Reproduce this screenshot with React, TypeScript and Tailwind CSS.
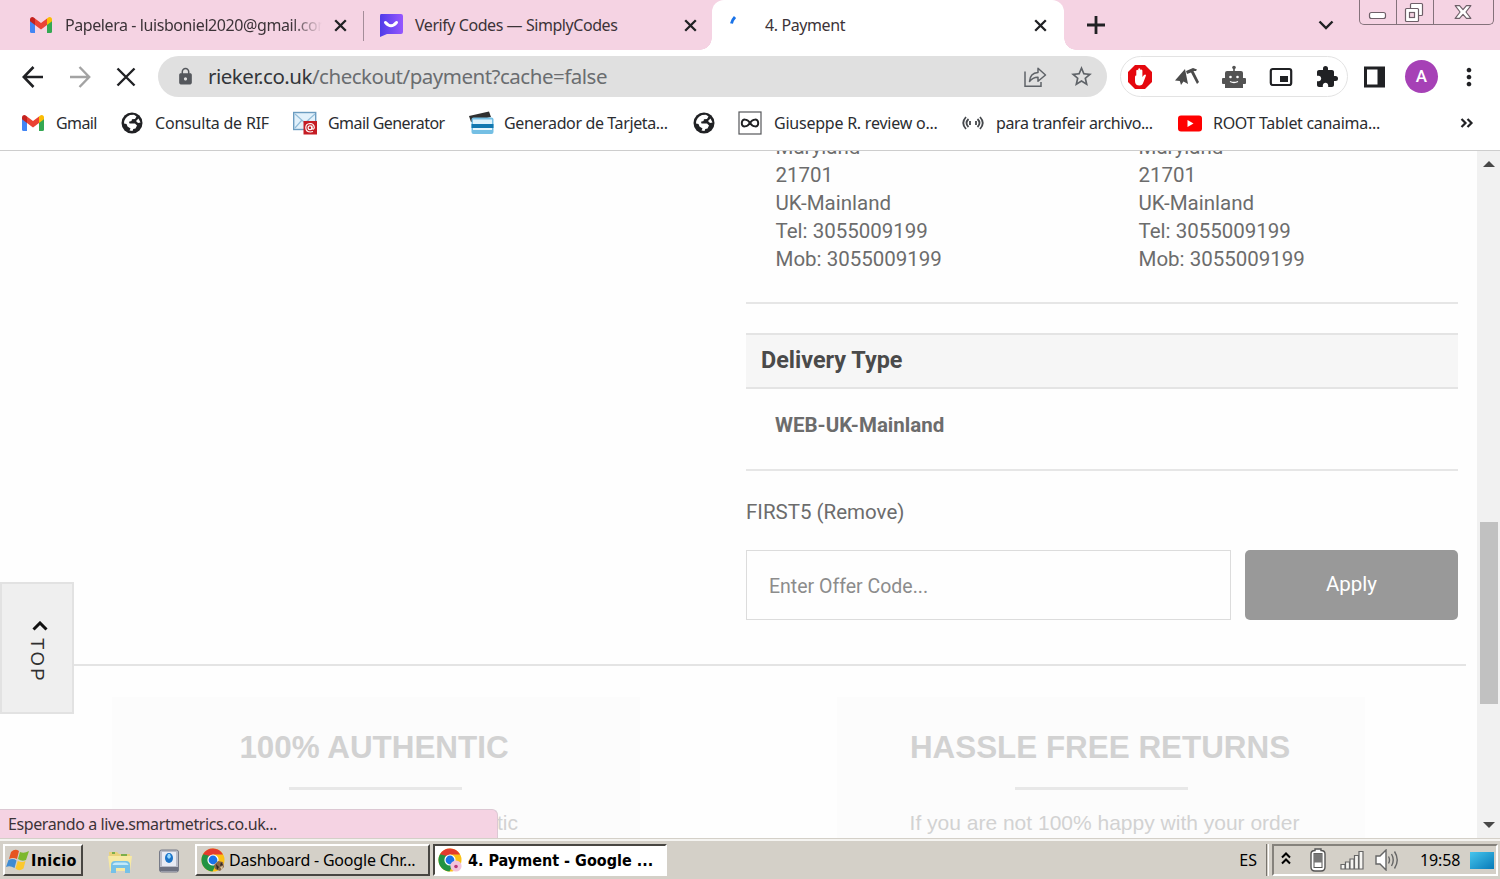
import React from "react";
import { MdLock, MdStarBorder, MdExtension, MdMoreVert } from "react-icons/md";

const UI = "font-['Noto_Sans',sans-serif] text-[16px] leading-none whitespace-nowrap";

function GmailIcon() {
  return (
    <svg viewBox="0 0 22 16" className="h-[16px] w-[22px] shrink-0">
      <path d="M0 3v11.5Q0 16 1.5 16H5V6z" fill="#4285f4" />
      <path d="M22 3v11.5Q22 16 20.500 16H17V6z" fill="#34a853" />
      <path d="M17 1.500V8l5-3.700V2.500Q22 0 19.500 0 18.300 0 17 1.500z" fill="#fbbc04" />
      <path d="M0 2.500V4.300L5 8V1.500Q3.700 0 2.500 0 0 0 0 2.500z" fill="#c5221f" />
      <path d="M5 1.500V8l6 4.500L17 8V1.500L11 6z" fill="#ea4335" />
    </svg>
  );
}

function TabClose() {
  return (
    <svg viewBox="0 0 13 13" className="size-[13px] shrink-0"><path d="M1.200 1.200 11.800 11.800M11.800 1.200 1.200 11.800" stroke="#202124" strokeWidth="2.300" /></svg>
  );
}

function Globe() {
  return (
    <svg viewBox="0 0 22 22" className="size-[22px] shrink-0">
      <circle cx="11" cy="11" r="10.500" fill="#202124" />
      <path d="M9 3 13 2.800 15.500 4.500 14 7 11 7.300 10.500 9 8 9.700 8.500 11.500 14 11.500 16 13.500 14.500 16.500 12.300 17 11.500 19 8.500 18.500 9.500 16.500 6.500 14.500 5.500 12 3 11.500Q3 5.500 9 3z" fill="#fff" />
      <path d="M17.500 6.500 19.500 10.500 17 11 15 9z" fill="#fff" />
    </svg>
  );
}

function Chrome({ badge }: { badge: string }) {
  return (
    <svg viewBox="0 0 24 24" className="size-[24px] shrink-0">
      <circle cx="12" cy="12" r="11.500" fill="#fbc116" />
      <path d="M2 6.200A11.500 11.500 0 0 0 11.500 23.500L16 14.500 12 12z" fill="#229342" />
      <path d="M2 6.200A11.500 11.500 0 0 1 22 6.500H12L7 10z" fill="#e33b2e" />
      <path d="M2 6.200 6.500 14 9 8z" fill="#229342" />
      <circle cx="12" cy="12" r="5.600" fill="#fff" />
      <circle cx="12" cy="12" r="4.400" fill="#1a73e8" />
      {badge === "photo" ? (
        <g>
          <path d="M13 17 17 13 22 14 23 19 19 23 14 21z" fill="#8b6848" />
          <path d="M15 16l3 3-2 3zM20 14l2 3-3 1z" fill="#332a24" />
          <path d="M19 19l3-1-1 4z" fill="#d9c7a0" />
        </g>
      ) : (
        <g>
          <circle cx="18" cy="18" r="5.600" fill="#f3c4dc" />
          <circle cx="18" cy="18.500" r="1.800" fill="#b83a77" />
        </g>
      )}
    </svg>
  );
}

function TabStrip() {
  return (
    <div className="flex h-[50px] bg-[#f5d3e3] text-[#3c3338]">
      <div className="flex w-[363px] items-center pl-[30px]">
        <GmailIcon />
        <span className={UI + " ml-[13px] w-[257px] overflow-hidden py-1 tracking-[-0.42px] [mask-image:linear-gradient(90deg,#000_88%,transparent)]"}>Papelera - luisboniel2020@gmail.com</span>
        <div className="ml-[12px]"><TabClose /></div>
      </div>
      <div className="mt-[11px] h-[30px] w-px bg-[#a48d99]" />
      <div className="flex w-[348px] items-center pl-[15px]">
        <svg viewBox="0 0 24 24" className="size-[24px] shrink-0">
          <defs><linearGradient id="sc" x1="0" x2="1"><stop stopColor="#4f3be8" /><stop offset="1" stopColor="#9657ff" /></linearGradient></defs>
          <path d="M2 1H22Q24 1 24 3V19Q24 21 22 21H8L1 24V3Q1 1 2 1z" fill="url(#sc)" />
          <path d="M6.500 9.500Q12 16 17.500 9.500" fill="none" stroke="#fff" strokeWidth="3" strokeLinecap="round" />
        </svg>
        <span className={UI + " ml-[12px] w-[269px] tracking-[-0.44px]"}>Verify Codes — SimplyCodes</span>
        <TabClose />
      </div>
      <div className="relative flex w-[352px] items-center rounded-t-[12px] bg-white pl-[17px]">
        <div className="absolute bottom-0 -left-[12px] size-[12px] bg-[radial-gradient(circle_at_0_0,transparent_11.5px,#fff_12px)]" />
        <div className="absolute bottom-0 -right-[12px] size-[12px] bg-[radial-gradient(circle_at_100%_0,transparent_11.5px,#fff_12px)]" />
        <svg viewBox="0 0 10 12" className="mb-[10px] h-[12px] w-[10px]"><path d="M2.500 9.500Q3.500 5.500 6 3" stroke="#1a73e8" strokeWidth="3" fill="none" /></svg>
        <span className={UI + " ml-[26px] w-[254px] tracking-[-0.4px]"}>4. Payment</span>
        <div className="ml-[15px]"><TabClose /></div>
      </div>
      <div className="flex w-[295px] items-center pl-[23px]">
        <svg viewBox="0 0 18 18" className="size-[18px]"><path d="M9 0V18M0 9H18" stroke="#202124" strokeWidth="2.800" /></svg>
        <svg viewBox="0 0 16 10" className="ml-[213px] h-[10px] w-[16px]"><path d="M1.500 1.500 8 8 14.500 1.500" stroke="#202124" strokeWidth="2.400" fill="none" /></svg>
      </div>
      <div className="flex h-[25px] w-[135px] rounded-b-[5px] border border-t-0 border-[#84727b]">
        <div className="w-[37px] border-r border-[#84727b]">
          <svg viewBox="0 0 36 24" className="h-[24px] w-[36px]"><rect x="9.500" y="12.500" width="16" height="6" rx="2" fill="#fff" stroke="#6e5f68" strokeWidth="1.200" /></svg>
        </div>
        <div className="w-[37px] border-r border-[#84727b]">
          <svg viewBox="0 0 36 24" className="h-[24px] w-[36px]" fill="#fff" stroke="#6e5f68" strokeWidth="1.200"><rect x="13.500" y="3.500" width="12" height="12" rx="1" /><rect x="8.500" y="8.500" width="13" height="13" rx="1" /><rect x="12.500" y="12.500" width="5" height="5" fill="#f5d3e3" /></svg>
        </div>
        <svg viewBox="0 0 60 24" className="h-[24px] w-[60px]"><path d="M21.500 5.500H26L29.500 9.500 33 5.500H37.500L32.500 12 37.500 18.500H33L29.500 14.500 26 18.500H21.500L26.500 12z" fill="#fff" stroke="#6e5f68" strokeWidth="1.200" strokeLinejoin="round" /></svg>
      </div>
    </div>
  );
}

function Toolbar() {
  return (
    <div className="flex h-[53px] items-center bg-white text-[#202124]">
      <svg viewBox="0 0 22 22" className="ml-[22px] size-[22px]"><path d="M21 11H2M11.500 1 1.800 11 11.500 21" stroke="#202124" strokeWidth="2.600" fill="none" /></svg>
      <svg viewBox="0 0 22 22" className="ml-[25px] size-[22px]"><path d="M1 11H20M10.500 1 20.200 11 10.500 21" stroke="#a3a3a3" strokeWidth="2.400" fill="none" /></svg>
      <svg viewBox="0 0 20 20" className="ml-[25px] size-[20px]"><path d="M1.500 1.500 18.500 18.500M18.500 1.500 1.500 18.500" stroke="#202124" strokeWidth="2.400" /></svg>
      <div className="ml-[22px] flex h-[41px] w-[949px] items-center rounded-full bg-[#e0e0e0] pl-[18px]">
        <MdLock className="size-[19px] text-[#55585d]" />
        <span className="ml-[13px] w-[815px] font-['Noto_Sans',sans-serif] text-[20.5px] leading-none tracking-[-0.49px] whitespace-nowrap text-[#6a6d70]"><span className="text-[#33363a]">rieker.co.uk</span>/checkout/payment?cache=false</span>
        <svg viewBox="0 0 24 22" className="h-[22px] w-[24px] shrink-0" fill="none" stroke="#5f6368" strokeWidth="1.500"><path d="M2 5.500V20.300H18V16" /><path d="M6.500 15.500Q7 7 15 6.500V2.300L22.500 9 15 15.300V11.200Q10 11 6.500 15.500z" strokeLinejoin="round" /></svg>
        <MdStarBorder className="ml-[22px] size-[25px] shrink-0 text-[#5f6368]" />
      </div>
      <div className="ml-[13px] flex h-[41px] w-[228px] items-center rounded-full border border-[#e3e3e3] pl-[7px]">
        <svg viewBox="0 0 24 24" className="size-[24px] shrink-0"><path d="M7 0H17L24 7V17L17 24H7L0 17V7z" fill="#e5080f" /><path d="M7 12Q7 10 8.300 10.500V5.500Q9.200 4 10.200 5.500V4Q11.200 2.700 12.300 4V5Q13.500 3.700 14.400 5.500V12L16 10Q17.700 9 18 10.500L15.500 17Q14.500 20.500 11.500 20.500 7 20.500 7 16z" fill="#fff" /></svg>
        <svg viewBox="0 0 24 18" className="ml-[23px] h-[18px] w-[24px] shrink-0" fill="#4b4b4b"><path d="M10 1 13 16 8.500 13.500 6 17 4.800 13 0 12.500z" /><path d="M11 3 18 0 22 1.500 21 3 18.500 3 24 14 22 16 16 4.500 12 6z" /></svg>
        <svg viewBox="0 0 24 24" className="ml-[23px] size-[24px] shrink-0"><circle cx="12" cy="2.500" r="1.800" fill="#535353" /><path d="M11.200 3h1.600v4h-1.600zM3 8Q3 6 5 6H19Q21 6 21 8V13H23Q24 13 24 14V18Q24 19 23 19H21V23H3V19H1Q0 19 0 18V14Q0 13 1 13H3z" fill="#535353" /><circle cx="8.500" cy="12" r="1.300" fill="#fff" /><circle cx="15.500" cy="12" r="1.300" fill="#fff" /><path d="M8 16.500Q12 18.500 16 16.500" fill="none" stroke="#fff" strokeWidth="1.300" /></svg>
        <svg viewBox="0 0 24 20" className="ml-[23px] h-[20px] w-[24px] shrink-0"><rect x="1.800" y="2" width="20.400" height="16" rx="2" fill="none" stroke="#202124" strokeWidth="2.200" /><rect x="11" y="9" width="8" height="6" fill="#202124" /></svg>
        <MdExtension className="ml-[22px] size-[24px] shrink-0" />
      </div>
      <svg viewBox="0 0 21 22" className="ml-[16px] h-[22px] w-[21px]"><rect x="1.500" y="2" width="18" height="18" fill="none" stroke="#202124" strokeWidth="3" /><rect x="13.500" y="1" width="7" height="20" fill="#202124" /></svg>
      <div className="ml-[20px] flex size-[33px] items-center justify-center rounded-full bg-[#a641b6] font-[Roboto,sans-serif] text-[17px] font-medium text-white">A</div>
      <MdMoreVert className="ml-[17px] size-[28px]" />
    </div>
  );
}

function Bookmarks() {
  const text = UI + " text-[#2b2d31]";
  return (
    <div className="flex h-[48px] items-center border-b border-[#cdcdcd] bg-white pb-[7px] pl-[22px]">
      <div className="flex w-[99px] items-center gap-[12px]"><GmailIcon /><span className={text + " tracking-[-0.6px]"}>Gmail</span></div>
      <div className="flex w-[172px] items-center gap-[12px]"><Globe /><span className={text + " tracking-[-0.2px]"}>Consulta de RIF</span></div>
      <div className="flex w-[176px] items-center gap-[11px]">
        <svg viewBox="0 0 24 24" className="size-[24px] shrink-0"><rect x=".700" y="1.500" width="22" height="17" fill="#e2f1fb" stroke="#6b9cc0" strokeWidth="1.400" /><path d="M2 3 12 12 22 3M2 17 9 9M21 17 15 9" stroke="#93bdd9" fill="none" strokeWidth="1.200" /><rect x="10.500" y="10" width="13.500" height="13.500" fill="#c51c24" /><circle cx="17" cy="16.700" r="1.900" fill="none" stroke="#fff" strokeWidth="1.200" /><path d="M18.900 14.500V17.500Q21 19 21.300 16.500 21 12.500 17 12.500 12.800 12.800 12.800 16.700 13 21 17.500 21L20 20.500" fill="none" stroke="#fff" strokeWidth="1.200" /></svg>
        <span className={text + " tracking-[-0.55px]"}>Gmail Generator</span>
      </div>
      <div className="flex w-[224px] items-center gap-[10px]">
        <svg viewBox="0 0 25 24" className="h-[24px] w-[25px] shrink-0"><path d="M0 5 20 .500 22 6 2 11z" fill="#303030" /><rect x="2.500" y="6.500" width="22" height="16.500" rx="2" fill="#74bfe4" /><rect x="4" y="8.500" width="19" height="4.500" fill="#dff2fb" /><rect x="2.500" y="13" width="22" height="4" fill="#1278b0" /><rect x="4" y="17" width="19" height="2" fill="#e8f6fc" /></svg>
        <span className={text + " tracking-[-0.37px]"}>Generador de Tarjeta...</span>
      </div>
      <div className="w-[45px]"><Globe /></div>
      <div className="flex w-[224px] items-center gap-[12px]">
        <svg viewBox="0 0 24 24" className="size-[24px] shrink-0"><rect x="1" y="1" width="22" height="22" fill="#fff" stroke="#55575a" strokeWidth="1.200" /><path d="M12 12C9.500 8 4 7 3.800 12S9.500 16 12 12 20 7 20.200 12 14.500 16 12 12z" fill="none" stroke="#202124" strokeWidth="2" /></svg>
        <span className={text + " tracking-[-0.23px]"}>Giuseppe R. review o...</span>
      </div>
      <div className="flex w-[216px] items-center gap-[12px]">
        <svg viewBox="0 0 22 14" className="h-[14px] w-[22px] shrink-0" fill="none" stroke="#45484c" strokeWidth="1.800"><path d="M4 1Q-1.500 7 4 13M6.500 3Q2.500 7 6.500 11M8 5V9M18 1Q23.500 7 18 13M15.500 3Q19.500 7 15.500 11M14 5V9" /></svg>
        <span className={text + " tracking-[-0.4px]"}>para tranfeir archivo...</span>
      </div>
      <div className="flex w-[282px] items-center gap-[11px]">
        <svg viewBox="0 0 24 16" className="h-[17px] w-[24px] shrink-0"><rect width="24" height="16" rx="3" fill="#f00" /><path d="M9.500 4.500 15.500 8 9.500 11.500z" fill="#fff" /></svg>
        <span className={text + " tracking-[-0.3px]"}>ROOT Tablet canaima...</span>
      </div>
      <svg viewBox="0 0 14 10" className="h-[10px] w-[14px]"><path d="M1.500 1 5.500 5 1.500 9M7.500 1 11.500 5 7.500 9" stroke="#202124" strokeWidth="2.200" fill="none" /></svg>
    </div>
  );
}

function Address() {
  return (
    <address className="w-[363px] shrink-0 text-[20.5px] leading-[28px] not-italic">
      Maryland<br />21701<br />UK-Mainland<br />Tel: 3055009199<br />Mob: 3055009199
    </address>
  );
}

function Checkout() {
  return (
    <section className="ml-[746px] w-[712px] text-[#6c6c6c]">
      <div className="-mt-[18px] flex pl-[29.5px]"><Address /><Address /></div>
      <div className="mt-[29px] h-[2px] bg-[#e6e6e6]" />
      <h2 className="mt-[29px] flex h-[56px] items-center border-y-2 border-[#e4e4e4] bg-[#f6f6f6] pl-[15px] text-[23.4px] font-bold text-[#4a4a4a]">Delivery Type</h2>
      <p className="mt-[22px] h-[58px] pl-[29px] text-[20.5px] leading-[28px] font-bold">WEB-UK-Mainland</p>
      <div className="h-[2px] bg-[#e6e6e6]" />
      <p className="mt-[27px] text-[20.5px] leading-[28px]">FIRST5 (Remove)</p>
      <div className="mt-[24px] flex h-[70px] gap-[14px]">
        <input className="w-[485px] border border-[#dcdcdc] pt-[3px] pl-[22px] text-[19.5px] outline-none placeholder:text-[#8c8c8c]" placeholder="Enter Offer Code..." />
        <button className="w-[213px] rounded-[5px] bg-[#999] pb-[2px] text-[20.5px] text-white">Apply</button>
      </div>
    </section>
  );
}

function Page() {
  return (
    <div className="flex h-[687px] bg-[#fefefe]">
      <main className="relative h-[687px] w-[1477px] overflow-hidden font-[Roboto,sans-serif]">
        <Checkout />
        <div className="mt-[44px] h-[2px] w-[1466px] bg-[#e4e4e4]" />
        <div className="mt-[31px] flex gap-[197px] pl-[112px] font-['Liberation_Sans',sans-serif] text-[#d2d2d2]">
          <div className="flex h-[150px] w-[528px] flex-col items-center bg-[#fcfcfc] pt-[32px]">
            <div className="mr-[4px] text-[31.4px] leading-[38px] font-bold whitespace-nowrap">100% AUTHENTIC</div>
            <div className="mt-[20px] mr-[1px] h-[3px] w-[173px] bg-[#e8e8e8]" />
            <div className="mt-[19px] mr-[122px] self-end text-[21px] leading-[28px]">tic</div>
          </div>
          <div className="flex h-[150px] w-[528px] flex-col items-center bg-[#fcfcfc] pt-[32px]">
            <div className="mr-[2px] text-[31.4px] leading-[38px] font-bold whitespace-nowrap">HASSLE FREE RETURNS</div>
            <div className="mt-[20px] h-[3px] w-[173px] bg-[#e8e8e8]" />
            <div className="mt-[19px] ml-[7px] text-[21px] leading-[28px] whitespace-nowrap">If you are not 100% happy with your order</div>
          </div>
        </div>
        <div className="absolute top-[431px] left-0 flex h-[132px] w-[74px] flex-col items-center border-2 border-[#e2e2e2] bg-[#efefef] pt-[37px] pl-[5px] text-[#303030]">
          <svg viewBox="0 0 16 10" className="h-[10px] w-[16px] shrink-0"><path d="M1.500 8.500 8 2 14.500 8.500" stroke="#111" strokeWidth="3" fill="none" /></svg>
          <span className="mt-[7px] mr-[5px] font-['Liberation_Sans',sans-serif] text-[18.5px] leading-[24px] tracking-[2.5px] [writing-mode:vertical-rl]">TOP</span>
        </div>
        <div className={UI + " absolute bottom-0 left-0 flex h-[29px] w-[498px] items-center rounded-tr-[6px] border-t border-r border-[#dcc8d3] bg-[#f5d3e3] pl-[8px] tracking-[-0.4px] text-[#3c3338]"}>Esperando a live.smartmetrics.co.uk...</div>
      </main>
      <div className="flex w-[23px] flex-col items-center bg-[#f1f1f1] pt-[10px]">
        <svg viewBox="0 0 12 6" className="h-[6px] w-[12px]"><path d="M0 6 6 0 12 6z" fill="#484848" /></svg>
        <div className="mt-[355px] h-[182px] w-[18px] bg-[#c1c1c1]" />
        <svg viewBox="0 0 12 6" className="mt-[118px] h-[6px] w-[12px]"><path d="M0 0 6 6 12 0z" fill="#484848" /></svg>
      </div>
    </div>
  );
}

const bold = "pt-px font-['DejaVu_Sans_Condensed','DejaVu_Sans',sans-serif] text-[16px] leading-none font-bold whitespace-nowrap text-black";
const raised = "border-2 border-t-white border-l-white border-r-[#484642] border-b-[#484642]";

function Taskbar() {
  return (
    <div className="flex h-[41px] border-t border-[#d4d0c8] bg-[#d4d0c8] shadow-[inset_0_2px_0_#f5f4f1]">
      <div className={"mt-[5px] ml-[3px] flex h-[32px] w-[80px] items-center pl-px " + raised}>
        <svg viewBox="0 0 24 22" className="h-[22px] w-[24px] shrink-0"><path d="M5 3Q9-1 13 2L11 10Q7 8 3 10z" fill="#e65520" /><path d="M14 3Q18 5 23 2L20 11Q16 13 12 10z" fill="#7db82e" /><path d="M2.500 11Q7 9 10.500 11.500L8.500 19Q4 16 0 18z" fill="#3f8bd3" /><path d="M11.800 12Q16 14 19.500 12L17.500 19.500Q13 23 9.500 19.500z" fill="#fbc82e" /></svg>
        <span className={bold + " ml-px tracking-[0.3px]"}>Inicio</span>
      </div>
      <svg viewBox="0 0 24 24" className="mt-[11px] ml-[25px] size-[24px] shrink-0"><path d="M1 2H9L11 4H22V20H2z" fill="#e9d27a" /><path d="M0 6H24L22 21H2z" fill="#f7e9a3" /><path d="M4 2h3v2H4zM13 4h6v2h-6z" fill="#7cae4b" /><path d="M3 23V15Q3 11 7 11H18Q22 11 22 15V23H17V18H8V23z" fill="#75c1e8" /><path d="M4.500 15Q5 12.500 8 12.500H17Q20 12.500 20.500 15z" fill="#c2e9fa" /></svg>
      <svg viewBox="0 0 22 24" className="mt-[10px] ml-[26px] h-[24px] w-[22px] shrink-0"><rect x="1.500" y="1" width="19" height="22" rx="2" fill="#b9bcc8" stroke="#777b88" /><rect x="4" y="3" width="14" height="14" fill="#e8ebf4" /><ellipse cx="11" cy="9" rx="4" ry="5" fill="#1c74c8" /><path d="M10 5h2l1 3-2 2-2-2z" fill="#92d6ff" /><rect x="2" y="18" width="18" height="4" fill="#6d7180" /></svg>
      <div className={"mt-[5px] ml-[15px] flex h-[32px] w-[235px] items-center pl-[4px] " + raised}>
        <Chrome badge="photo" /><span className={UI + " ml-[4px] tracking-[-0.2px] text-black"}>Dashboard - Google Chr...</span>
      </div>
      <div className="mt-[5px] ml-[3px] flex h-[32px] w-[234px] items-center border-2 border-t-[#484642] border-r-white border-b-white border-l-[#484642] bg-white pl-[3px]">
        <Chrome badge="pink" /><span className={bold + " ml-[6px]"}>4. Payment - Google ...</span>
      </div>
      <div className="grow" />
      <span className={UI + " mt-[13px] text-black"}>ES</span>
      <div className="mt-[5px] ml-[9px] h-[32px] w-[3px] border-r border-l border-r-white border-l-[#77746e]" />
      <div className="mt-[5px] mr-[2px] ml-[3px] flex h-[32px] w-[226px] items-center border-2 border-t-[#85827c] border-r-white border-b-white border-l-[#85827c] pl-[7px]">
        <svg viewBox="0 0 10 13" className="mb-[3px] h-[13px] w-[10px]"><path d="M1 5.500 5 1.500 9 5.500M1 11.500 5 7.500 9 11.500" stroke="#000" strokeWidth="2" fill="none" /></svg>
        <svg viewBox="0 0 16 24" className="ml-[19px] h-[24px] w-[16px]"><path d="M5 2.500V1H11V2.500Q15 2.500 15 6V19Q15 23 11 23H5Q1 23 1 19V6Q1 2.500 5 2.500z" fill="#fff" stroke="#555" strokeWidth="1.400" /><rect x="4" y="5.500" width="8" height="14" fill="#fff" stroke="#555" /><rect x="4" y="5.500" width="8" height="9" fill="#777" /></svg>
        <svg viewBox="0 0 24 20" className="ml-[14px] h-[20px] w-[24px]" fill="#f6f5f2" stroke="#666" strokeWidth="1.200"><path d="M1 14.500h4V19H1zM5.500 12h4v7h-4zM10 9h4v10h-4zM14.500 5.500h4V19h-4zM19 1.500h4V19h-4z" /></svg>
        <svg viewBox="0 0 24 22" className="ml-[11px] h-[22px] w-[24px]" fill="none" stroke="#666" strokeWidth="1.400"><path d="M1 7H5L11 1V21L5 15H1z" fill="#fff" /><path d="M13.500 7.500Q15.500 11 13.500 14.500M16.500 5Q20 11 16.500 17M19.500 2.500Q25 11 19.500 19.500" /></svg>
        <span className={UI + " ml-[21px] tracking-[-0.1px] text-black"}>19:58</span>
        <svg viewBox="0 0 24 18" className="ml-[10px] h-[18px] w-[24px]"><defs><linearGradient id="desk" x1="0" y1="0" x2="1" y2="1"><stop stopColor="#45c5ed" /><stop offset="1" stopColor="#087ab8" /></linearGradient></defs><path d="M0 1H24V18H0z" fill="url(#desk)" /></svg>
      </div>
    </div>
  );
}

export default function App() {
  return (
    <div className="h-[879px] w-[1500px] overflow-hidden bg-white">
      <TabStrip />
      <Toolbar />
      <Bookmarks />
      <Page />
      <Taskbar />
    </div>
  );
}
